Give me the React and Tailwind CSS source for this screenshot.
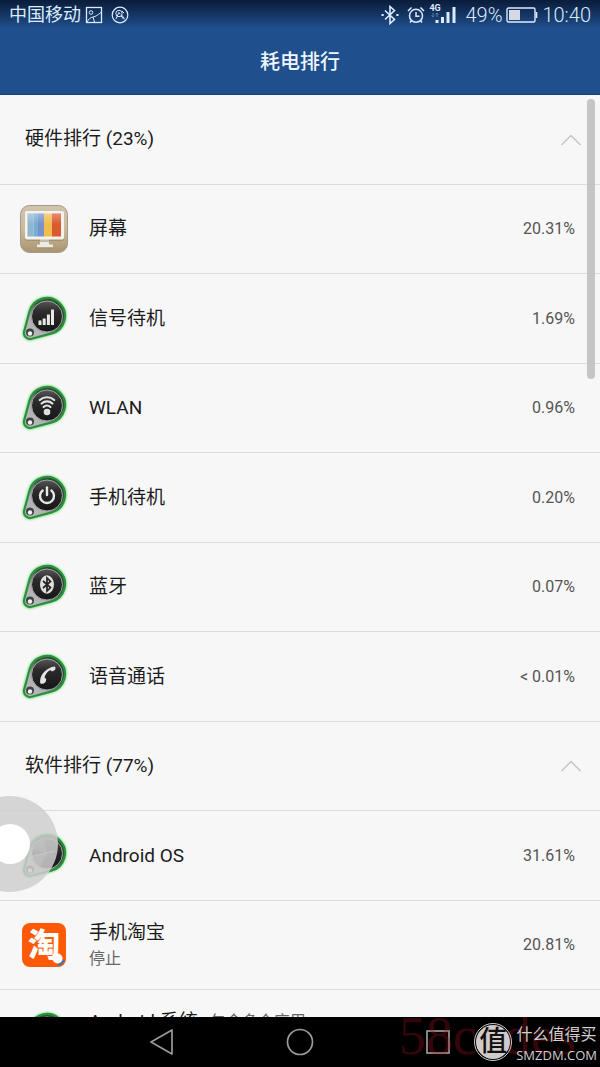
import React, { useState } from 'react';

const hardware = [
  { id: 'screen', name: '屏幕', percent: '20.31%' },
  { id: 'signal', name: '信号待机', percent: '1.69%' },
  { id: 'wlan', name: 'WLAN', percent: '0.96%' },
  { id: 'power', name: '手机待机', percent: '0.20%' },
  { id: 'bluetooth', name: '蓝牙', percent: '0.07%' },
  { id: 'phone', name: '语音通话', percent: '< 0.01%' },
];

const software = [
  { id: 'os', name: 'Android OS', percent: '31.61%' },
  { id: 'taobao', name: '手机淘宝', status: '停止', percent: '20.81%' },
  { id: 'system', name: 'Android 系统', note: '包含多个应用' },
];

const ScreenIcon = () => (
  <svg viewBox="0 0 48 48" className="size-12 shrink-0" aria-hidden="true">
    <defs>
      <linearGradient id="wood" x1="0" y1="0" x2="0" y2="1">
        <stop offset="0" stopColor="#cfc4b0" />
        <stop offset="0.5" stopColor="#cdbb9b" />
        <stop offset="1" stopColor="#a8946f" />
      </linearGradient>
      <linearGradient id="shine" x1="0" y1="0" x2="0" y2="1">
        <stop offset="0" stopColor="#fff" stopOpacity="0.3" />
        <stop offset="1" stopColor="#fff" stopOpacity="0" />
      </linearGradient>
    </defs>
    <rect x="0.5" y="0.5" width="47" height="47" rx="9" fill="url(#wood)" stroke="#a39a8b" />
    <rect x="5" y="8" width="39" height="28" rx="2" fill="#8f7c5c" opacity="0.5" />
    <rect x="5" y="6" width="39" height="28.5" rx="2" fill="#f4f2ee" />
    <rect x="7.500" y="8.500" width="6" height="23" fill="#8fb6cf" />
    <rect x="13.500" y="8.500" width="4.500" height="23" fill="#78abd6" />
    <rect x="18" y="8.500" width="6" height="23" fill="#7792c6" />
    <rect x="24" y="8.500" width="8" height="23" fill="#f0bd4c" />
    <rect x="32" y="8.500" width="9" height="23" fill="#d95a30" />
    <rect x="7.500" y="8.500" width="33.500" height="11" fill="url(#shine)" />
    <path d="M20 34.500h9v5h4v3H17v-3h3z" fill="#eceae5" />
    <path d="M20 36h9M17 43h16" stroke="#9b8a6c" strokeWidth="1" />
  </svg>
);

const badgeGlyphs = {
  signal: (
    <path d="M18.500 25.500h3V30h-3zM22.700 23.500h3V30h-3zM26.900 19.500h3V30h-3zM31 14.500h3V30h-3z" fill="#e8e8e8" />
  ),
  wlan: (
    <g fill="none" stroke="#e2e2e2" strokeWidth="2.200" strokeLinecap="round">
      <path d="M19.800 16a10.800 10.800 0 0 1 14.400 0" />
      <path d="M21.600 19.500a8 8 0 0 1 10.800 0" />
      <path d="M23.600 23a5 5 0 0 1 6.800 0" />
      <circle cx="27" cy="28" r="2.200" fill="#d0d0d0" />
    </g>
  ),
  power: (
    <g fill="none" stroke="#e8e8e8" strokeWidth="2.400" strokeLinecap="round">
      <path d="M22.600 16.500a7 7 0 1 0 8.800 0" />
      <path d="M27 13.500v7.500" />
    </g>
  ),
  bluetooth: (
    <g>
      <ellipse cx="27" cy="21.500" rx="7" ry="9.200" fill="#dedede" />
      <path d="M23 18l7.500 6.500-3.500 3.500V15l3.500 3.500-7.500 6.500" fill="none" stroke="#222" strokeWidth="1.700" />
    </g>
  ),
  phone: (
    <path
      d="M20.300 30.500c-1.300-7 4.200-14 11.500-16.500l3.200-.5c.8 1.500.6 3-.4 3.800l-2.800 1.200-1.500-1.400c-3.300 2-5.200 4.500-5.700 7.600l1.700 1.300-.6 2.800c-1 1.800-3.600 2.600-5.400 1.700z"
      fill="#e4e4e4"
    />
  ),
  // brushed metal sheen
  os: (
    <g>
      <path d="M27 21.500L12 25.500A15.500 15.500 0 0 0 20 35.300z" fill="#8d8d8d" opacity="0.5" />
      <path d="M27 21.500L12 17.500A15.500 15.500 0 0 1 24 6.300z" fill="#7c7c7c" opacity="0.5" />
      <path d="M12 24.500L35 19" stroke="#c4c4c4" strokeWidth="1.500" opacity="0.6" />
    </g>
  ),
};

const BadgeIcon = ({ type }) => (
  <svg viewBox="0 0 48 48" className="size-12 shrink-0" aria-hidden="true">
    <defs>
      <linearGradient id="inside" x1="0" y1="1" x2="1" y2="0">
        <stop offset="0" stopColor="#b9c4ba" />
        <stop offset="0.35" stopColor="#b4acb8" />
        <stop offset="0.6" stopColor="#33523a" />
        <stop offset="1" stopColor="#1c4a28" />
      </linearGradient>
      <linearGradient id="disc" x1="0" y1="0" x2="0" y2="1">
        <stop offset="0" stopColor="#565656" />
        <stop offset="0.35" stopColor="#2b2b2b" />
        <stop offset="1" stopColor="#161616" />
      </linearGradient>
      <filter id="glow" x="-20%" y="-20%" width="140%" height="140%">
        <feGaussianBlur stdDeviation="1" />
      </filter>
    </defs>
    <path
      d="M9.600 16.300A18 18 0 1 1 31.700 38.400L11.600 43.800A6 6 0 0 1 4.200 36.400Z"
      fill="none"
      stroke="#54dd5c"
      strokeOpacity="0.75"
      strokeWidth="3.500"
      filter="url(#glow)"
    />
    <path
      d="M9.600 16.300A18 18 0 1 1 31.700 38.400L11.600 43.800A6 6 0 0 1 4.200 36.400Z"
      fill="url(#inside)"
      stroke="#2c8f3f"
      strokeWidth="2.200"
    />
    <circle cx="27" cy="21.500" r="15.500" fill="url(#disc)" stroke="#a3a5a3" strokeWidth="1" />
    <circle cx="10" cy="37.500" r="4" fill="#3a443c" />
    <circle cx="10" cy="38.500" r="2.200" fill="#f1f1f1" />
    {badgeGlyphs[type]}
  </svg>
);

const TaobaoIcon = () => (
  <div className="flex size-12 shrink-0 items-center justify-center">
    <div className="relative flex size-11 items-center justify-center rounded-lg bg-[#fc5a06]">
      <span className="text-[32px] leading-none font-black text-white">淘</span>
      <svg viewBox="0 0 14 14" className="absolute right-0 bottom-0 size-[14px]" aria-hidden="true">
        <path d="M6 12A8 8 0 0 0 12 7" stroke="#1c7fd0" strokeWidth="2" fill="none" />
        <circle cx="5.500" cy="5.500" r="5" fill="#fff" />
      </svg>
    </div>
  </div>
);

const RowIcon = ({ id }) => {
  if (id === 'screen') return <ScreenIcon />;
  if (id === 'taobao') return <TaobaoIcon />;
  return <BadgeIcon type={id} />;
};

const GroupHeader = ({ title, open, onToggle }) => (
  <li className="h-[90px] border-b border-[#dcdcdc] even:h-[89px]">
    <button
      type="button"
      onClick={onToggle}
      aria-expanded={open}
      className="flex h-full w-full items-center justify-between pr-[18px] pl-[25px] text-left"
    >
      <span className="text-[19px]">{title}</span>
      <svg viewBox="0 0 22 12" className={`h-3 w-[22px] ${open ? '' : 'rotate-180'}`} aria-hidden="true">
        <path d="M1.500 11L11 1.500 20.500 11" fill="none" stroke="#c4c4c4" strokeWidth="1.500" />
      </svg>
    </button>
  </li>
);

const UsageRow = ({ item }) => (
  <li className="flex h-[90px] items-center gap-[21px] border-b border-[#dcdcdc] pr-[25px] pl-5 even:h-[89px]">
    <RowIcon id={item.id} />
    <div className={`min-w-0 flex-1 ${item.note ? 'self-start pt-[18px]' : ''}`}>
      <p className="flex items-center gap-3 text-[19px] leading-7">
        {item.name}
        {item.note && <span className="text-base text-[#666]">{item.note}</span>}
      </p>
      {item.status && <p className="text-base leading-6 text-[#666]">{item.status}</p>}
    </div>
    <span className="text-base text-[#555]">{item.percent}</span>
  </li>
);

const StatusBar = () => (
  <div className="flex h-[29px] items-center justify-between px-[9px] text-[#dcebff]">
    <div className="flex items-center">
      <span className="text-lg">中国移动</span>
      <svg viewBox="0 0 18 18" className="ml-1 size-[18px]" fill="none" stroke="currentColor" aria-hidden="true">
        <rect x="1.500" y="1.500" width="15" height="15" strokeWidth="1.300" />
        <circle cx="6" cy="6.500" r="1.800" />
        <path d="M2 16c1.500-3 3.500-4.500 6-5 3-.6 4.500-1.800 8-4.500M8 11l1.500 5" />
      </svg>
      <svg viewBox="0 0 18 18" className="ml-2 size-[18px]" fill="none" stroke="currentColor" aria-hidden="true">
        <circle cx="9" cy="9" r="7.800" strokeWidth="1.200" />
        <circle cx="8" cy="7.500" r="3.200" />
        <path d="M8 6l-3 7M8 7l1.500 1M10 10l3 3.500M10.500 9l3 3.500M11 5l2 2" />
      </svg>
    </div>
    <div className="flex items-center">
      <svg viewBox="0 0 18 20" className="h-5 w-[18px]" fill="none" stroke="currentColor" strokeWidth="1.600" aria-hidden="true">
        <path d="M4 5.500l9.500 9-4.500 4V1.500l4.500 4-9.500 9" />
        <path d="M.5 10h2.200M15.300 10h2.200" strokeWidth="2" />
      </svg>
      <svg viewBox="0 0 18 18" className="ml-2 size-[18px]" fill="none" stroke="currentColor" strokeWidth="1.500" aria-hidden="true">
        <circle cx="9" cy="9.800" r="6.500" />
        <path d="M9 6v4.300h3.500M1 5l3.500-3.500M17 5l-3.500-3.500M4.500 14.500L3 16.500M13.500 14.500l1.500 2" />
      </svg>
      <div className="relative ml-1 h-[22px] w-[28px]">
        <span className="absolute top-0 left-0 text-[9px] leading-none font-bold">4G</span>
        <svg viewBox="0 0 28 22" className="size-full" fill="currentColor" aria-hidden="true">
          <path d="M6.500 16h3v3h-3zM12 13h3v6h-3zM17.500 8h3v11h-3zM23.500 3h3v16h-3z" />
          <path d="M4 9v4M2.500 11.500L4 13l1.500-1.500M8 13V9M6.500 10.500L8 9l1.500 1.500" fill="none" stroke="#557cae" />
        </svg>
      </div>
      <span className="ml-2 text-xl leading-none font-light">49%</span>
      <svg viewBox="0 0 32 16" className="mx-1 h-4 w-8" fill="none" stroke="currentColor" aria-hidden="true">
        <rect x="1" y="1" width="28" height="14" rx="1.500" strokeWidth="1.400" />
        <path d="M30.500 5v6" strokeWidth="1.600" />
        <rect x="3" y="3" width="11" height="10" fill="#d5dae2" stroke="none" />
      </svg>
      <span className="text-xl leading-none font-light">10:40</span>
    </div>
  </div>
);

const NavBar = () => (
  <nav className="relative h-[50px] shrink-0 overflow-hidden bg-black">
    <div className="grid h-full grid-cols-3 px-[93px] text-[#9a9a9a]">
      <button type="button" aria-label="返回" className="flex items-center justify-center">
        <svg viewBox="0 0 26 28" className="h-7 w-[26px]" fill="none" stroke="currentColor" strokeWidth="1.700">
          <path d="M23 2v24L2 14z" strokeLinejoin="round" />
        </svg>
      </button>
      <button type="button" aria-label="主页" className="flex items-center justify-center">
        <svg viewBox="0 0 28 28" className="size-7" fill="none" stroke="currentColor" strokeWidth="1.700">
          <circle cx="14" cy="14" r="12.500" />
        </svg>
      </button>
      <button type="button" aria-label="最近任务" className="flex items-center justify-center">
        <svg viewBox="0 0 26 26" className="size-[26px]" fill="none" stroke="currentColor" strokeWidth="1.700">
          <rect x="2" y="2" width="22" height="22" />
        </svg>
      </button>
    </div>
    <span className="pointer-events-none absolute -top-1.5 right-6 font-['Liberation_Serif',serif] text-[54px] leading-[50px] text-[#b01020]/30">
      58codes
    </span>
    <div className="pointer-events-none absolute top-0 right-0 flex h-full items-center gap-1 pr-[3px] text-[#cfcfcf]">
      <span className="flex size-[38px] items-center justify-center rounded-full border border-[#cfcbcb] bg-[#cfcbcb] bg-clip-content p-px text-[28px] leading-none font-medium text-[#151010]">
        值
      </span>
      <div className="pt-[6px] text-center">
        <p className="text-base leading-5">什么值得买</p>
        <p className="font-['Open_Sans',sans-serif] text-[13px] leading-5">SMZDM.COM</p>
      </div>
    </div>
  </nav>
);

const App = () => {
  const [hardwareOpen, setHardwareOpen] = useState(true);
  const [softwareOpen, setSoftwareOpen] = useState(true);

  return (
    <div className="relative flex h-screen flex-col overflow-hidden bg-[#f7f7f7] font-['Roboto','Noto_Sans_CJK_SC',sans-serif] text-[#1c1c1c]">
      <header className="shrink-0 border-b border-[#1d4079] bg-[#1f4f8c] bg-linear-to-b from-[#0a1c3a] via-[#1f4f8c] via-30% to-[#1f4f8c]">
        <StatusBar />
        <h1 className="flex h-[65px] items-center justify-center text-xl font-medium text-[#eef6ff]">耗电排行</h1>
      </header>

      <main className="relative min-h-0 flex-1 overflow-hidden">
        <ul>
          <GroupHeader title="硬件排行 (23%)" open={hardwareOpen} onToggle={() => setHardwareOpen(!hardwareOpen)} />
          {hardwareOpen && hardware.map((item) => <UsageRow key={item.id} item={item} />)}
          <GroupHeader title="软件排行 (77%)" open={softwareOpen} onToggle={() => setSoftwareOpen(!softwareOpen)} />
          {softwareOpen && software.map((item) => <UsageRow key={item.id} item={item} />)}
        </ul>
        <div className="absolute top-1 right-[5px] h-[280px] w-2 rounded-full bg-[#bfbfbf]/90" />
        <button
          type="button"
          aria-label="悬浮按钮"
          className="absolute bottom-[125px] -left-[38px] flex size-24 items-center justify-center rounded-full bg-[#cfcfcf]/85"
        >
          <span className="size-10 rounded-full bg-white" />
        </button>
      </main>

      <NavBar />
    </div>
  );
};

export default App;
